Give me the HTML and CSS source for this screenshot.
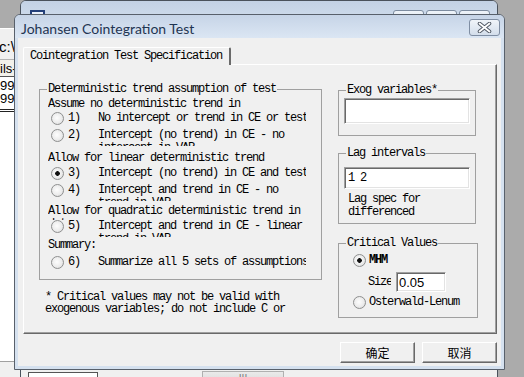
FILE: index.html
```html
<!DOCTYPE html>
<html>
<head>
  <meta charset="utf-8">
  <title>Johansen Cointegration Test</title>
  <link rel="stylesheet" href="styles.css">
</head>
<body>
  <!-- workfile window, far behind -->
  <div class="main-win">
    <div class="path-bar">c:\</div>
    <div class="tool-row">ils-</div>
    <div class="sheet">
      <div class="cell">99</div>
      <div class="cell">99</div>
    </div>
    <div class="status"></div>
  </div>

  <!-- equation window -->
  <div class="eq-win">
    <div class="eq-title">
      <span class="eq-icon"></span>
      <span class="eq-name">Equation: UNTITLED   Workfile: 数据::Untitled\</span>
      <span class="eq-btns">
        <span class="wbtn"></span><span class="wbtn"></span><span class="wbtn"></span>
      </span>
    </div>
    <div class="eq-body"></div>
    <div class="eq-foot">
      <span class="foot-box">Estimate</span>
      <span class="foot-bar">|||</span>
    </div>
  </div>

  <!-- dialog -->
  <div class="dialog">
    <div class="titlebar">
      <span class="title">Johansen Cointegration Test</span>
      <span class="close-btn">
        <svg width="15" height="11" viewBox="0 0 15 11">
          <path d="M2.5 1.5 L12.5 9.5 M12.5 1.5 L2.5 9.5" stroke="#4d5561" stroke-width="3.6" stroke-linecap="round"/>
          <path d="M2.5 1.5 L12.5 9.5 M12.5 1.5 L2.5 9.5" stroke="#ffffff" stroke-width="1.8" stroke-linecap="round"/>
        </svg>
      </span>
    </div>

    <div class="client">
      <div class="tabs">
        <div class="tab">Cointegration Test Specification</div>
      </div>

      <div class="pane">
        <div class="col-left">
          <fieldset class="grp grp-trend">
            <legend>Deterministic trend assumption of test</legend>
            <div class="line mt2">Assume no deterministic trend in</div>
            <div class="opt mt1">
              <span class="radio"></span><span class="num">1)</span>
              <span class="lbl single">No intercept or trend in CE or test VAR</span>
            </div>
            <div class="opt">
              <span class="radio"></span><span class="num">2)</span>
              <span class="lbl">Intercept (no trend) in CE - no intercept in VAR</span>
            </div>
            <div class="line mt6">Allow for linear deterministic trend</div>
            <div class="opt mt2">
              <span class="radio checked"></span><span class="num">3)</span>
              <span class="lbl single">Intercept (no trend) in CE and test VAR</span>
            </div>
            <div class="opt">
              <span class="radio"></span><span class="num">4)</span>
              <span class="lbl">Intercept and trend in CE - no trend in VAR</span>
            </div>
            <div class="line wrap mt4">Allow for quadratic deterministic trend in data</div>
            <div class="opt">
              <span class="radio"></span><span class="num">5)</span>
              <span class="lbl">Intercept and trend in CE - linear trend in VAR</span>
            </div>
            <div class="line mt2">Summary:</div>
            <div class="opt mt4">
              <span class="radio"></span><span class="num">6)</span>
              <span class="lbl single">Summarize all 5 sets of assumptions</span>
            </div>
          </fieldset>
          <p class="footnote">* Critical values may not be valid with exogenous variables; do not include C or @TREND.</p>
        </div>

        <div class="col-right">
          <fieldset class="grp grp-r grp-exog">
            <legend>Exog variables*</legend>
            <input class="field exog-field" value="">
          </fieldset>

          <fieldset class="grp grp-r grp-lag">
            <legend>Lag intervals</legend>
            <input class="field lag-field" value="1 2">
            <div class="lag-note">Lag spec for differenced endogenous</div>
          </fieldset>

          <fieldset class="grp grp-r grp-crit">
            <legend>Critical Values</legend>
            <div class="copt mt4">
              <span class="radio checked"></span><span class="copt-lbl bold">MHM</span>
            </div>
            <div class="size-row">
              <span class="size-lbl">Size:</span>
              <input class="field size-field" value="0.05">
            </div>
            <div class="copt mt4">
              <span class="radio"></span><span class="copt-lbl">Osterwald-Lenum</span>
            </div>
          </fieldset>
        </div>
      </div>

      <div class="buttons">
        <button class="btn">确定</button>
        <button class="btn">取消</button>
      </div>
    </div>
  </div>
</body>
</html>
```

FILE: styles.css
```css
/* desktop */
body {
  margin: 0;
  width: 524px;
  height: 377px;
  position: relative;
  overflow: hidden;
  background-color: #ababab;
  font-family: "Liberation Mono", monospace;
}

/* workfile window peeking out on the left */
.main-win {
  position: absolute;
  left: 0;
  top: 28px;
  width: 120px;
  height: 349px;
  background-color: #fff;
  display: flex;
  flex-direction: column;
  font-family: "Liberation Sans", sans-serif;
  color: #000;
}
.path-bar {
  height: 31px;
  box-sizing: border-box;
  border-top: 1px solid #fff;
  background-color: #f0f0f0;
  font-size: 15px;
  line-height: 36px;
  text-indent: -1px;
}
.tool-row {
  height: 18px;
  box-sizing: border-box;
  border-top: 1px solid #b4b4b4;
  border-bottom: 1px solid #555;
  background-color: #f3f1ea;
  font-size: 13px;
  line-height: 18px;
}
.sheet {
  height: 30px;
  padding-top: 2px;
  border-bottom: 3px double #222;
}
.cell {
  height: 13px;
  font-size: 13px;
  line-height: 13px;
}
.status {
  margin-top: auto;
  height: 15px;
  border-top: 1px solid #a0a0a0;
  background-color: #f0f0f0;
}

/* equation window */
.eq-win {
  position: absolute;
  left: 20px;
  top: 0;
  width: 478px;
  height: 392px;
  box-sizing: border-box;
  border: 1px solid #4a525c;
  border-radius: 6px 6px 0 0;
  background-color: #d6e1ee;
  display: flex;
  flex-direction: column;
}
.eq-title {
  height: 29px;
  box-sizing: border-box;
  display: flex;
  align-items: flex-start;
  padding: 9px 7px 0 9px;
  border-radius: 5px 5px 0 0;
  background: linear-gradient(#c3d2e5, #d5e1ef);
}
.eq-icon {
  width: 15px;
  height: 15px;
  box-sizing: border-box;
  border: 2px solid #24407a;
  background-color: #eaf0fa;
}
.eq-name {
  margin: 4px 0 0 7px;
  font-family: "Lato", "Noto Sans CJK SC", sans-serif;
  font-size: 14px;
  line-height: 16px;
  color: #1f3552;
  white-space: pre;
}
.eq-btns {
  margin-left: auto;
  display: flex;
  gap: 2px;
}
.wbtn {
  width: 31px;
  height: 18px;
  box-sizing: border-box;
  border: 1px solid #7d8ca0;
  border-radius: 3px;
  background: linear-gradient(#eef3f9, #d5e0ec);
}
.eq-body {
  flex: 1;
  margin: 0 4px;
  background-color: #fff;
}
.eq-foot {
  height: 21px;
  display: flex;
  align-items: flex-start;
  background-color: #f0f0f0;
  font-family: "Liberation Sans", sans-serif;
  font-size: 11px;
}
.foot-box {
  margin: 2px 0 0 7px;
  width: 70px;
  height: 18px;
  box-sizing: border-box;
  border: 1px solid #555;
  background-color: #fff;
  color: #1c3fa8;
  text-align: center;
  font-weight: bold;
  line-height: 20px;
}
.foot-bar {
  margin: 1px 0 0 104px;
  width: 82px;
  height: 18px;
  box-sizing: border-box;
  border: 1px solid #b0b0b0;
  background: linear-gradient(#eaeaea, #d4d4d4);
  color: #777;
  text-align: center;
  line-height: 12px;
}

/* dialog frame */
.dialog {
  position: absolute;
  left: 14px;
  top: 14px;
  width: 491px;
  height: 356px;
  box-sizing: border-box;
  border: 1px solid #58606b;
  border-radius: 6px 6px 0 0;
  background-color: #d5e1ef;
  padding: 0 3px 3px;
  display: flex;
  flex-direction: column;
  font-size: 12px;
  letter-spacing: -1.2px;
  line-height: 13px;
  color: #000;
}
.titlebar {
  margin: 0 -3px;
  height: 23px;
  display: flex;
  align-items: flex-start;
  padding: 4px 4px 0 6px;
  box-sizing: border-box;
  border-radius: 5px 5px 0 0;
  background: linear-gradient(#c6d4e7, #dbe6f3);
}
.title {
  margin-top: 2px;
  font-family: "Lato", sans-serif;
  font-size: 14px;
  letter-spacing: 0;
  line-height: 16px;
  color: #1f3552;
}
.close-btn {
  margin-left: auto;
  width: 31px;
  height: 17px;
  box-sizing: border-box;
  border: 1px solid #7f8ea3;
  border-radius: 3px;
  background: linear-gradient(#f0f4f9, #d3deeb);
  display: flex;
  align-items: center;
  justify-content: center;
}
.client {
  flex: 1;
  background-color: #f0f0f0;
  padding: 9px 4px 0 5px;
}

/* tab control */
.tabs {
  display: flex;
}
.tab {
  position: relative;
  height: 18px;
  box-sizing: border-box;
  margin-bottom: -1px;
  padding: 1px 7px 0 6px;
  border: 1px solid #fff;
  border-bottom: none;
  border-right: 2px solid #6a6a6a;
  border-radius: 2px 2px 0 0;
  background-color: #f0f0f0;
  line-height: 15px;
}
.pane {
  height: 270px;
  box-sizing: border-box;
  border: 1px solid;
  border-color: #fff #696969 #696969 #fff;
  box-shadow: inset -1px -1px 0 #a0a0a0;
  padding: 18px 0 0 15px;
  display: flex;
}

/* group boxes */
.grp {
  margin: 0;
  min-width: 0;
  box-sizing: border-box;
  border: 1px solid #a0a0a0;
  padding: 0 0 0 7px;
}
.grp legend {
  padding: 0 1px;
  height: 13px;
  line-height: 13px;
}
.grp-trend {
  width: 283px;
  padding-bottom: 6px;
}
.col-right {
  margin-left: 16px;
  margin-top: 1px;
}
.grp-r {
  width: 138px;
  padding: 0 5px;
}
.grp-r legend {
  margin-left: 2px;
}
.grp-exog {
  padding-bottom: 11px;
}
.grp-lag {
  margin-top: 11px;
  padding-bottom: 4px;
}
.grp-crit {
  margin-top: 13px;
  width: 140px;
  padding-bottom: 8px;
}

/* rows */
.mt1 { margin-top: 1px; }
.mt2 { margin-top: 2px; }
.mt4 { margin-top: 4px; }
.mt6 { margin-top: 6px; }
.line {
  margin-left: 1px;
  height: 13px;
  overflow: hidden;
  white-space: nowrap;
}
.line.wrap {
  height: 15px;
  width: 256px;
  white-space: normal;
}
.opt {
  margin-left: 1px;
  display: flex;
  height: 17px;
  overflow: hidden;
}
.radio {
  flex: none;
  width: 13px;
  height: 13px;
  box-sizing: border-box;
  margin-left: 3px;
  border: 1px solid #8e8f8f;
  border-radius: 50%;
  background: radial-gradient(circle at 45% 45%, #fdfdfd 0, #ececec 55%, #d2d2d2 100%);
}
.radio.checked {
  background:
    radial-gradient(circle, #111 0, #111 2px, transparent 2.6px),
    radial-gradient(circle at 45% 45%, #fdfdfd 0, #ececec 55%, #d2d2d2 100%);
}
.num {
  flex: none;
  width: 30px;
  margin-left: 4px;
  white-space: nowrap;
}
.lbl {
  flex: none;
  width: 208px;
  overflow: hidden;
}
.lbl.single {
  white-space: nowrap;
}
.footnote {
  margin: 11px 0 0 6px;
  width: 250px;
  height: 24px;
  line-height: 12px;
  overflow: hidden;
}

/* edit fields */
.field {
  display: block;
  box-sizing: border-box;
  margin: 0;
  padding: 0 3px;
  border: 1px solid;
  border-color: #a0a0a0 #fff #fff #a0a0a0;
  box-shadow: inset 1px 1px 0 #696969, inset -1px -1px 0 #e3e3e3;
  background-color: #fff;
  font-family: "Liberation Mono", monospace;
  font-size: 12px;
  letter-spacing: -1.2px;
  color: #000;
  outline: none;
}
.exog-field {
  margin-top: 1px;
  width: 126px;
  height: 26px;
}
.lag-field {
  margin-top: 7px;
  width: 126px;
  height: 22px;
}
.lag-note {
  margin: 4px 0 0 4px;
  width: 122px;
  height: 26px;
  overflow: hidden;
}
.copt {
  display: flex;
  height: 13px;
}
.copt .radio {
  margin-left: 9px;
}
.copt-lbl {
  margin-left: 3px;
  white-space: nowrap;
}
.bold {
  font-weight: bold;
}
.size-row {
  margin-top: 5px;
  display: flex;
  align-items: center;
  height: 20px;
}
.size-lbl {
  margin-left: 24px;
  width: 23px;
  margin-right: 5px;
  overflow: hidden;
  white-space: nowrap;
}
.size-field {
  width: 50px;
  height: 20px;
  padding: 0 2px;
  font-family: "Liberation Sans", sans-serif;
  font-size: 13px;
  letter-spacing: 0;
}

/* OK / Cancel */
.buttons {
  margin-top: 8px;
  display: flex;
  justify-content: flex-end;
  gap: 7px;
}
.btn {
  width: 75px;
  height: 21px;
  box-sizing: border-box;
  padding: 0;
  border: 1px solid;
  border-color: #fff #696969 #696969 #fff;
  box-shadow: inset -1px -1px 0 #a0a0a0;
  background-color: #f0f0f0;
  font-family: "Noto Sans CJK SC", sans-serif;
  font-size: 12px;
  color: #000;
}
```
